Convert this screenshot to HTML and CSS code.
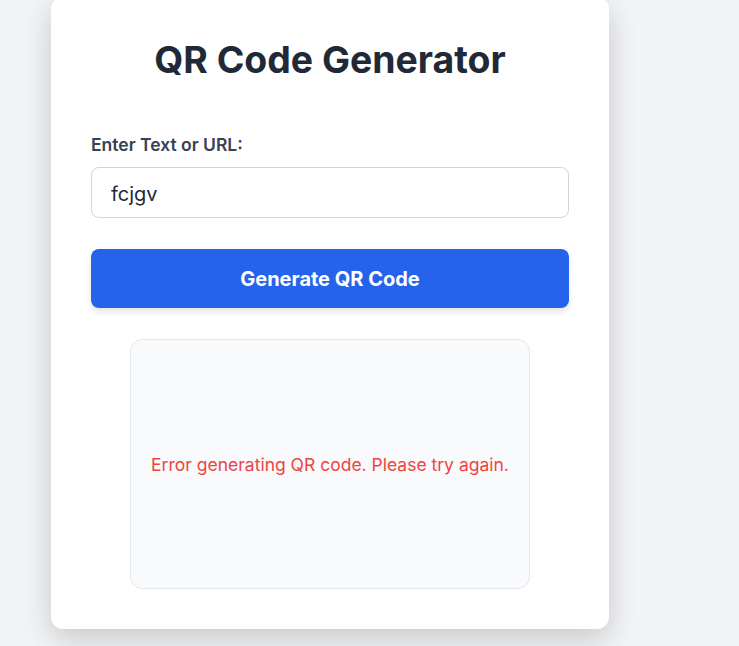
FILE: index.html
```html
<!DOCTYPE html>
<html lang="en">
<head>
<meta charset="UTF-8">
<title>QR Code Generator</title>
<link rel="stylesheet" href="styles.css">
</head>
<body>
  <main class="card">
    <h1 class="title">QR Code Generator</h1>
    <label class="label" for="qr-input">Enter Text or URL:</label>
    <input id="qr-input" class="input" type="text" value="fcjgv">
    <button class="button" type="button">Generate QR Code</button>
    <div class="result">
      <p class="error">Error generating QR code. Please try again.</p>
    </div>
  </main>
</body>
</html>
```

FILE: styles.css
```css
* { box-sizing: border-box; }

html {
  overflow: hidden;
  background: #f3f4f6;
}

body {
  margin: 0;
  padding: 0 0 40px;
  background: #f3f4f6;
  font-family: Inter, "Noto Sans", "Liberation Sans", sans-serif;
}

.card {
  width: 558px;
  margin: -3px 0 0 51px;
  padding: 41px 40px 40px;
  background: #ffffff;
  border-radius: 12px;
  box-shadow: 0 10px 30px rgba(0, 0, 0, 0.18);
  display: flex;
  flex-direction: column;
}

.title {
  margin: 0 0 52px;
  font-size: 37.4px;
  line-height: 43px;
  font-weight: 700;
  color: #1f2937;
  text-align: center;
}

.label {
  display: block;
  font-size: 17.5px;
  line-height: 24px;
  font-weight: 600;
  color: #374151;
  margin-bottom: 10px;
}

.input {
  display: block;
  width: 100%;
  height: 51px;
  padding: 2px 19px 0;
  font-family: inherit;
  font-size: 20px;
  color: #1f2937;
  border: 1px solid #d1d5db;
  border-radius: 8px;
  background: #fff;
  outline: none;
  margin-bottom: 31px;
}

.button {
  display: block;
  width: 100%;
  height: 59px;
  border: none;
  border-radius: 8px;
  background: #2563eb;
  color: #ffffff;
  font-family: inherit;
  font-size: 20px;
  font-weight: 700;
  box-shadow: 0 4px 6px rgba(0, 0, 0, 0.1);
  margin-bottom: 31px;
  cursor: pointer;
}

.result {
  align-self: center;
  width: 400px;
  height: 250px;
  background: #f9fafb;
  border: 1px solid #e5e7eb;
  border-radius: 12px;
  display: flex;
  align-items: center;
  justify-content: center;
}

.error {
  margin: 0;
  color: #ef4444;
  font-size: 17.5px;
  text-align: center;
}
```
